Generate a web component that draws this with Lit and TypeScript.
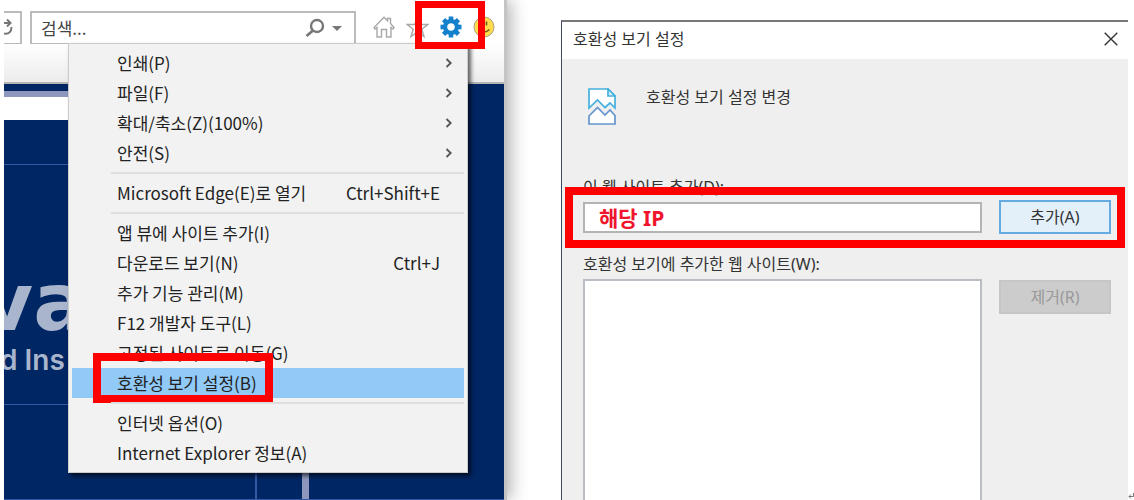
import { LitElement, html, css, nothing } from "lit";
import { customElement } from "lit/decorators.js";

interface Entry {
  label: string;
  keys?: string;
  sub?: boolean;
  active?: boolean;
}

const GROUPS: Entry[][] = [
  [
    { label: "인쇄(P)", sub: true },
    { label: "파일(F)", sub: true },
    { label: "확대/축소(Z)(100%)", sub: true },
    { label: "안전(S)", sub: true },
  ],
  [{ label: "Microsoft Edge(E)로 열기", keys: "Ctrl+Shift+E" }],
  [
    { label: "앱 뷰에 사이트 추가(I)" },
    { label: "다운로드 보기(N)", keys: "Ctrl+J" },
    { label: "추가 기능 관리(M)" },
    { label: "F12 개발자 도구(L)" },
    { label: "고정된 사이트로 이동(G)" },
    { label: "호환성 보기 설정(B)", active: true },
  ],
  [{ label: "인터넷 옵션(O)" }, { label: "Internet Explorer 정보(A)" }],
];

const GEAR_TEETH = [0, 45, 90, 135, 180, 225, 270, 315];

@customElement("tools-menu")
class ToolsMenu extends LitElement {
  static styles = css`
    :host {
      display: block;
      box-sizing: border-box;
      padding: 4px 3px 4px;
      background: #f2f2f2;
      border: 1px solid #ccc;
      box-shadow: 3px 3px 4px rgba(0, 0, 0, 0.6);
    }
    .group + .group {
      margin-top: 4px;
      padding-top: 6px;
      position: relative;
    }
    .group + .group::before {
      content: "";
      position: absolute;
      top: 0;
      left: 39px;
      right: 0;
      height: 2px;
      background: #dedede;
    }
    .item {
      display: flex;
      align-items: center;
      width: 100%;
      height: 30px;
      padding: 0 24px 1px 45px;
      border: 0;
      background: none;
      font: inherit;
      color: #222;
      text-align: left;
      white-space: nowrap;
    }
    .active {
      background: #91c9f7;
      position: relative;
    }
    .label {
      flex: 1;
    }
    .mark {
      position: absolute;
      left: 21px;
      top: -15px;
      width: 180px;
      height: 50px;
      box-sizing: border-box;
      border: 8px solid #f00;
    }
    .arrow {
      width: 8px;
      height: 10px;
      margin-right: -13px;
    }
  `;

  render() {
    return GROUPS.map(
      (g) => html`<div class="group" role="group">
        ${g.map(
          (e) => html`<button class="item ${e.active ? "active" : ""}" role="menuitem">
            <span class="label">${e.label}</span>
            ${e.keys ? html`<span>${e.keys}</span>` : nothing}
            ${e.sub
              ? html`<svg class="arrow" viewBox="0 0 8 10">
                  <path d="M1.5 1 5.7 5 1.5 9" fill="none" stroke="#555" stroke-width="1.800" />
                </svg>`
              : nothing}
            ${e.active ? html`<span class="mark"></span>` : nothing}
          </button>`
        )}
      </div>`
    );
  }
}

@customElement("browser-pane")
class BrowserPane extends LitElement {
  static styles = css`
    :host {
      display: flex;
      flex-direction: column;
      position: relative;
      background: #fff;
      box-sizing: border-box;
      border-right: 3px solid #c4c4c4;
      box-shadow: 4px 0 16px rgba(0, 0, 0, 0.3);
      clip-path: inset(0 -32px 0 0);
    }
    .bar {
      display: flex;
      align-items: flex-start;
      padding-top: 11px;
      height: 33px;
    }
    .reload {
      width: 18px;
      height: 33px;
      padding: 0;
      box-sizing: border-box;
      border: 1px solid #bbb;
      border-width: 2px 2px 1px 0;
      background: #fff;
    }
    .reload svg {
      display: block;
    }
    .search {
      display: flex;
      align-items: center;
      flex: 1;
      height: 33px;
      margin-left: 8px;
      box-sizing: border-box;
      border: 1px solid #bbb;
      border-width: 2px 2px 1px 2px;
      background: #fff;
    }
    .search input {
      flex: 1;
      min-width: 0;
      padding: 0 0 0 9px;
      border: 0;
      outline: 0;
      font: inherit;
      background: none;
    }
    .search input::placeholder {
      color: #444;
      opacity: 1;
    }
    .glass {
      width: 38px;
      height: 20px;
      margin-right: 11px;
    }
    .icons {
      display: flex;
      align-items: center;
      height: 32px;
      gap: 11px;
      padding: 0 9px 0 17px;
    }
    .tool {
      position: relative;
      display: block;
      padding: 0;
      border: 0;
      background: none;
      height: 22px;
    }
    .tool svg {
      display: block;
    }
    .mark {
      position: absolute;
      z-index: 1;
      left: -25px;
      top: -15px;
      width: 70px;
      height: 48px;
      box-sizing: border-box;
      border: 7px solid #f00;
    }
    .strip {
      height: 38px;
      background: linear-gradient(#fff, #ececec);
      border-bottom: 2px solid #b5b5b5;
    }
    .page {
      flex: 1;
      display: flex;
      flex-direction: column;
      padding-right: 195px;
      background: #002663;
      border-bottom: 1px solid #3558a5;
    }
    .line {
      border-bottom: 6px solid #8e97bd;
      height: 7px;
    }
    .white {
      height: 23px;
      background: #fff;
    }
    .head {
      height: 44px;
      border-bottom: 1px solid #3558a5;
    }
    .brand {
      height: 240px;
      box-sizing: border-box;
      padding-top: 108px;
      border-bottom: 1px solid #3558a5;
      color: #a9b5cc;
      overflow: hidden;
      white-space: nowrap;
    }
    .logo {
      margin-left: -23px;
      font: 700 80px/60px "DejaVu Sans", sans-serif;
    }
    .tag {
      margin: 11px 0 0 -4px;
      font: 600 28px/32px "Inter", sans-serif;
    }
    .foot {
      flex: 1;
      display: flex;
    }
    .col {
      width: 251px;
      border-right: 2px solid #3558a5;
    }
    .col2 {
      flex: 1;
      border-right: 7px solid #8e97bd;
    }
    .menu {
      position: absolute;
      left: 64px;
      top: 43px;
      right: 36px;
    }
  `;

  render() {
    return html`
      <div class="bar">
        <button class="reload" aria-label="새로 고침">
          <svg width="14" height="30" viewBox="0 0 14 30" fill="none" stroke="#777" stroke-width="2">
            <path d="M0 10h6M3 6.500 6.500 10 3 13.500M7.500 14c0 5-3 7.500-7.500 6.500" />
          </svg>
        </button>
        <div class="search">
          <input aria-label="검색" placeholder="검색..." />
          <svg class="glass" viewBox="0 0 38 20" fill="none">
            <circle cx="12" cy="8" r="6" stroke="#777" stroke-width="2.400" />
            <path d="M8 12.500 1.500 18" stroke="#777" stroke-width="2.800" />
            <path d="M27 8h10l-5 5z" fill="#777" />
          </svg>
        </div>
        <div class="icons">
          <button class="tool" aria-label="홈">
            <svg width="22" height="22" viewBox="0 0 22 22" fill="none" stroke="#a8a8a8" stroke-width="1.400">
              <path d="M4 11.500 2 13 1 11.500 11 1.200l3.500 3.500V2.500h3v5l3.500 4-1 1.500-2-1.500V21h-4.500v-7.500h-5V21H4z" />
            </svg>
          </button>
          <button class="tool" aria-label="즐겨찾기">
            <svg width="23" height="22" viewBox="0 0 23 22" fill="none" stroke="#a8a8a8" stroke-width="1.400">
              <path d="m11.500 1.500 2.700 7h7.600l-6 4.700 2.200 7.300-6.500-4.400L5 20.500l2.200-7.300-6-4.700h7.600z" />
            </svg>
          </button>
          <button class="tool" aria-label="도구">
            <svg width="22" height="22" viewBox="-11 -11 22 22">
              ${GEAR_TEETH.map(
                (a) => html`<svg x="-11" y="-11" width="22" height="22" viewBox="-11 -11 22 22">
                  <path d="M-2.300 -10.500h4.600v4.500h-4.600z" fill="#1381cb" transform="rotate(${a})" />
                </svg>`
              )}
              <circle r="5.900" fill="none" stroke="#1381cb" stroke-width="4.200" />
            </svg>
            <span class="mark"></span>
          </button>
          <button class="tool" aria-label="의견 보내기">
            <svg width="22" height="22" viewBox="0 0 22 22">
              <circle cx="11" cy="11" r="10" fill="#ffdc4c" stroke="#aaa07a" />
              <path d="M8.500 5.500v4M13.500 5.500v4M5.500 13.500q5.500 5 11 0" fill="none" stroke="#6b5a1e" stroke-width="1.600" />
            </svg>
          </button>
        </div>
      </div>
      <div class="strip"></div>
      <div class="page">
        <div class="line"></div>
        <div class="white"></div>
        <div class="head"></div>
        <div class="brand">
          <div class="logo">va</div>
          <div class="tag">d Ins</div>
        </div>
        <div class="foot">
          <div class="col"></div>
          <div class="col2"></div>
        </div>
      </div>
      <tools-menu class="menu" role="menu"></tools-menu>
    `;
  }
}

@customElement("compat-dialog")
class CompatDialog extends LitElement {
  static styles = css`
    :host {
      display: flex;
      flex-direction: column;
      box-sizing: border-box;
      background: #efefef;
      border-top: 2px solid #777;
      border-left: 1px solid #3c4a60;
      color: #333;
    }
    .title {
      display: flex;
      align-items: center;
      justify-content: space-between;
      height: 34px;
      padding: 0 10px 3px 11px;
      background: #fff;
    }
    h1,
    p {
      margin: 0;
      font: inherit;
    }
    p {
      line-height: 18px;
    }
    .close {
      display: block;
      padding: 0;
      border: 0;
      background: none;
      height: 14px;
    }
    .close svg {
      display: block;
    }
    .intro {
      display: flex;
      gap: 30px;
      padding: 29px 26px 0;
      height: 86px;
    }
    .form {
      flex: 1;
      display: grid;
      grid-template-columns: 1fr 112px;
      grid-template-rows: 26px 32px 47px 1fr;
      column-gap: 17px;
      padding: 0 17px 0 21px;
    }
    .full {
      grid-column: 1 / -1;
      line-height: 26px;
    }
    .row {
      grid-column: 1 / -1;
      display: grid;
      grid-template-columns: 1fr 112px;
      column-gap: 17px;
      align-items: center;
      position: relative;
    }
    .box {
      height: 31px;
      min-width: 0;
      box-sizing: border-box;
      padding: 0 0 0 14px;
      border: 2px solid #b4b4b4;
      background: #fff;
      outline: 0;
      font: 700 21px/26px "Noto Sans", "Noto Sans CJK KR", sans-serif;
      color: #f0142d;
    }
    .mark {
      position: absolute;
      left: -18px;
      right: -14px;
      top: -13px;
      height: 61px;
      box-sizing: border-box;
      border: 8px solid #f00;
      pointer-events: none;
    }
    .btn {
      height: 34px;
      padding: 0;
      border: 2px solid #64abe2;
      background: #e3f0fa;
      font: inherit;
      color: #333;
    }
    .off {
      height: 34px;
      margin-top: 1px;
      background: #ccc;
      border-color: #c6c6c6;
      color: #999;
    }
    .list {
      box-sizing: border-box;
      border: 2px solid #b9bdc4;
      border-bottom: 0;
      background: #fff;
    }
    .second {
      padding-top: 19px;
    }
  `;

  render() {
    return html`
      <div class="title">
        <h1>호환성 보기 설정</h1>
        <button class="close" aria-label="닫기">
          <svg width="14" height="14" viewBox="0 0 14 14">
            <path d="m.7.7 12.600 12.600M13.300.7.7 13.300" stroke="#333" stroke-width="1.400" />
          </svg>
        </button>
      </div>
      <div class="intro">
        <svg width="28" height="37" viewBox="0 0 28 37" stroke-width="1.700">
          <path d="M1 20V1h19l7 7v12l-5-5-5 4.500-7.500-7.500z" fill="#fff" stroke="#45b0dc" />
          <path d="M20 1v7h7z" fill="#d8f0fa" stroke="#45b0dc" />
          <path d="M1 36V28l8.500-8.500 7.500 7.500 5-5 5 5.500V36z" fill="#fff" stroke="#6495cf" />
        </svg>
        <p>호환성 보기 설정 변경</p>
      </div>
      <div class="form">
        <label class="full" for="site">이 웹 사이트 추가(D):</label>
        <div class="row">
          <input class="box" id="site" value="해당 IP" />
          <button class="btn">추가(A)</button>
          <div class="mark"></div>
        </div>
        <div class="full second" id="sites">호환성 보기에 추가한 웹 사이트(W):</div>
        <div class="list" role="listbox" aria-labelledby="sites"></div>
        <button class="btn off" disabled>제거(R)</button>
      </div>
    `;
  }
}

@customElement("app-root")
class AppRoot extends LitElement {
  static styles = css`
    :host {
      display: grid;
      grid-template-columns: 503fr 567fr;
      column-gap: 54px;
      box-sizing: border-box;
      min-height: 100vh;
      padding: 0 6px 0 4px;
      background: #fff;
      font: 17px/24px "Noto Sans CJK KR", sans-serif;
      overflow: hidden;
      position: relative;
    }
    .dialog {
      margin-top: 20px;
      font-size: 16px;
      font-family: "Noto Sans", "Noto Sans CJK KR", sans-serif;
    }
    .ret {
      position: absolute;
      right: 0;
      bottom: 0;
    }
  `;

  render() {
    return html`
      <browser-pane></browser-pane>
      <compat-dialog class="dialog"></compat-dialog>
      <svg class="ret" width="6" height="8" viewBox="0 0 6 8">
        <path d="M5.500 1v3.500H1M3 2.500l-2 2 2 2" fill="none" stroke="#777" />
      </svg>
    `;
  }
}
